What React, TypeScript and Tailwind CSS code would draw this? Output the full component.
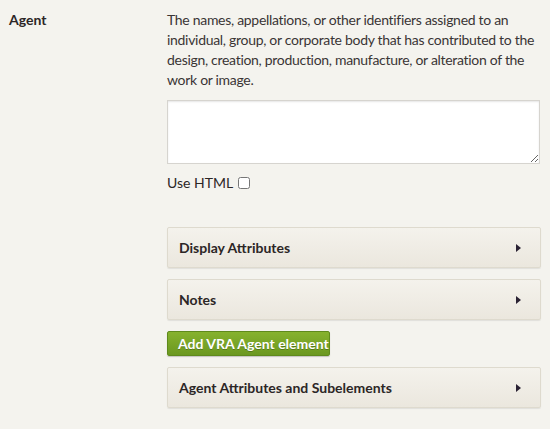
import { useState } from "react";

function Panel({ title }: { title: string }) {
  return (
    <div className="flex h-[41px] items-center justify-between rounded-[2px] border border-[#dedace] bg-gradient-to-b from-[#f4f2ec] to-[#ebe7de] pl-[11px] pr-[19px] shadow-[0_1px_1px_rgba(0,0,0,0.08)]">
      <span className="text-[14px] font-bold text-[#2c2626]">{title}</span>
      <svg width="5" height="8" viewBox="0 0 5 8" className="text-[#2a2233]">
        <path d="M0 0 L5 4 L0 8 Z" fill="currentColor" />
      </svg>
    </div>
  );
}

export default function App() {
  const [html, setHtml] = useState(false);

  return (
    <div className="min-h-[429px] w-[550px] bg-[#f4f3ee] font-['Lato',sans-serif] text-[#333]">
      <div className="flex pt-[10px]">
        <div className="w-[167px] shrink-0 pl-[9px] text-[14px] font-bold leading-[20px] text-[#2c2626]">
          Agent
        </div>

        <div className="w-[374px]">
          <p className="text-[14px] leading-[20px] tracking-[-0.3px] text-[#3a3535]">
            The names, appellations, or other identifiers assigned to an
            individual, group, or corporate body that has contributed to the
            design, creation, production, manufacture, or alteration of the
            work or image.
          </p>

          <textarea className="mt-[10px] block h-[64px] w-[373px] resize-y border border-[#d6d4cf] bg-white shadow-[inset_0_1px_2px_rgba(0,0,0,0.1)] outline-none" />

          <label className="mt-[9px] flex items-center gap-[5px] text-[14px] leading-[20px] text-[#2c2626]">
            Use HTML
            <input
              type="checkbox"
              checked={html}
              onChange={(e) => setHtml(e.target.checked)}
              className="h-[12px] w-[12px]"
            />
          </label>

          <div className="mt-[34px] flex flex-col gap-[11px]">
            <Panel title="Display Attributes" />
            <Panel title="Notes" />
            <button className="h-[25px] w-[163px] rounded-[2px] border border-[#5f8a1c] bg-gradient-to-b from-[#86b22e] to-[#6b9820] pl-[10px] text-left text-[14px] font-bold text-white shadow-[0_1px_1px_rgba(0,0,0,0.2)] [text-shadow:0_1px_0_rgba(0,0,0,0.25)]">
              Add VRA Agent element
            </button>
            <Panel title="Agent Attributes and Subelements" />
          </div>
        </div>
      </div>
    </div>
  );
}
